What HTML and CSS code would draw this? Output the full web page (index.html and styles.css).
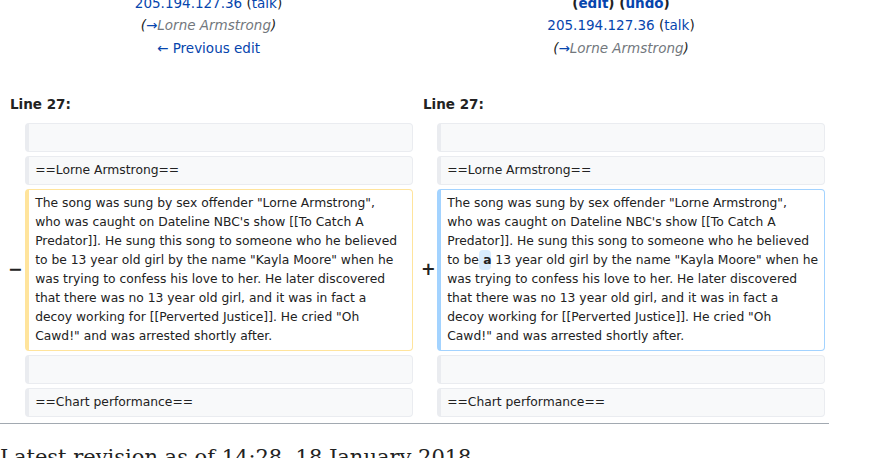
FILE: index.html
```html
<!DOCTYPE html>
<html lang="en">
<head>
<meta charset="utf-8">
<title>Difference between revisions</title>
<link rel="stylesheet" href="styles.css">
</head>
<body>
<div class="page">
  <table class="diff">
    <colgroup>
      <col class="col-marker-l">
      <col class="col-content">
      <col class="col-marker-r">
      <col class="col-content">
    </colgroup>
    <tr>
      <td colspan="2" class="diff-title">
        <div><a href="#">205.194.127.36</a> <span class="tools">(<a href="#">talk</a>)</span></div>
        <div><span class="comment">(<span class="autocomment"><a href="#">→</a>Lorne Armstrong</span>)</span></div>
        <div><a href="#">← Previous edit</a></div>
      </td>
      <td colspan="2" class="diff-title">
        <div><strong>(<a href="#">edit</a>) (<a href="#">undo</a>)</strong></div>
        <div><a href="#">205.194.127.36</a> <span class="tools">(<a href="#">talk</a>)</span></div>
        <div><span class="comment">(<span class="autocomment"><a href="#">→</a>Lorne Armstrong</span>)</span></div>
      </td>
    </tr>
    <tr>
      <td colspan="2" class="diff-lineno">Line 27:</td>
      <td colspan="2" class="diff-lineno">Line 27:</td>
    </tr>
    <tr>
      <td class="diff-marker"></td>
      <td class="diff-line diff-context"><br></td>
      <td class="diff-marker"></td>
      <td class="diff-line diff-context"><br></td>
    </tr>
    <tr>
      <td class="diff-marker"></td>
      <td class="diff-line diff-context">==Lorne Armstrong==</td>
      <td class="diff-marker"></td>
      <td class="diff-line diff-context">==Lorne Armstrong==</td>
    </tr>
    <tr>
      <td class="diff-marker">−</td>
      <td class="diff-line diff-deleted">The song was sung by sex offender "Lorne Armstrong",<br>who was caught on Dateline NBC's show [[To Catch A<br>Predator]]. He sung this song to someone who he believed<br>to be 13 year old girl by the name "Kayla Moore" when he<br>was trying to confess his love to her. He later discovered<br>that there was no 13 year old girl, and it was in fact a<br>decoy working for [[Perverted Justice]]. He cried "Oh<br>Cawd!" and was arrested shortly after.</td>
      <td class="diff-marker">+</td>
      <td class="diff-line diff-added">The song was sung by sex offender "Lorne Armstrong",<br>who was caught on Dateline NBC's show [[To Catch A<br>Predator]]. He sung this song to someone who he believed<br>to be<ins class="change"> a</ins> 13 year old girl by the name "Kayla Moore" when he<br>was trying to confess his love to her. He later discovered<br>that there was no 13 year old girl, and it was in fact a<br>decoy working for [[Perverted Justice]]. He cried "Oh<br>Cawd!" and was arrested shortly after.</td>
    </tr>
    <tr>
      <td class="diff-marker"></td>
      <td class="diff-line diff-context"><br></td>
      <td class="diff-marker"></td>
      <td class="diff-line diff-context"><br></td>
    </tr>
    <tr>
      <td class="diff-marker"></td>
      <td class="diff-line diff-context">==Chart performance==</td>
      <td class="diff-marker"></td>
      <td class="diff-line diff-context">==Chart performance==</td>
    </tr>
  </table>
  <hr class="diff-hr">
  <h2 class="current-title">Latest revision as of 14:28, 18 January 2018</h2>
</div>
</body>
</html>
```

FILE: styles.css
```css
body {
  margin: 0;
  background: #ffffff;
  color: #222222;
  font-family: "DejaVu Sans", sans-serif;
}

.page {
  width: 829px;
  margin-top: -12px;
}

a {
  color: #0645ad;
  text-decoration: none;
}

table.diff {
  width: 829px;
  table-layout: fixed;
  border-collapse: separate;
  border-spacing: 4px;
}

.col-marker-l { width: 17px; }
.col-marker-r { width: 16px; }
.col-content { width: 388px; }

.diff-title {
  padding: 0;
  text-align: center;
  vertical-align: top;
  font-size: 13.5px;
  line-height: 22.4px;
}

.comment {
  font-style: italic;
}

.autocomment {
  color: #72777d;
}

.diff-lineno {
  padding: 31.6px 6px 5.2px;
  font-size: 13.5px;
  font-weight: bold;
  line-height: 19px;
}

.diff-marker {
  padding: 0 0 0 4px;
  vertical-align: middle;
  font-size: 17.5px;
  font-weight: bold;
  line-height: 1;
  white-space: nowrap;
}

.diff-line {
  padding: 4px 1px 4px 6.16px;
  font-size: 12.32px;
  line-height: 19px;
  vertical-align: top;
  white-space: pre-wrap;
  overflow-wrap: break-word;
  border-style: solid;
  border-width: 1px 1px 1px 4px;
  border-radius: 4px;
}

.diff-context {
  background: #f8f9fa;
  border-color: #eaecf0;
}

.diff-deleted {
  background: #ffffff;
  border-color: #ffe49c;
}

.diff-added {
  background: #ffffff;
  border-color: #a3d3ff;
}

.change {
  text-decoration: none;
  font-weight: bold;
  background: #d8ecff;
  border-radius: 4px;
  padding: 3px 0;
}

.diff-hr {
  height: 1px;
  margin: 2px 0 0;
  border: 0;
  background: #a2a9b1;
}

.current-title {
  margin: 20px 0 0;
  font-family: "DejaVu Serif", serif;
  font-size: 21px;
  font-weight: normal;
  line-height: 1.3;
}
```
